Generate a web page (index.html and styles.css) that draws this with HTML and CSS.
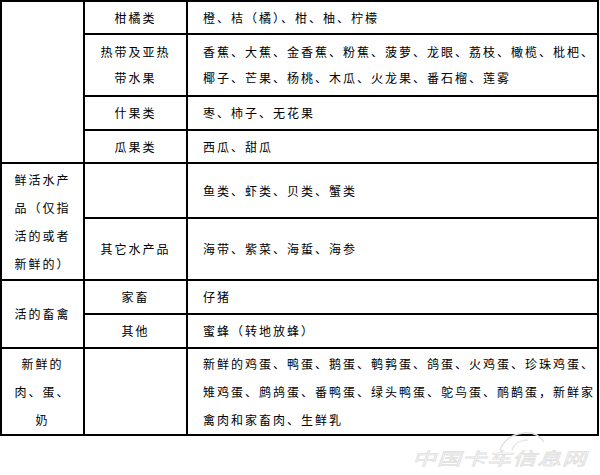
FILE: index.html
```html
<!DOCTYPE html>
<html lang="zh-CN">
<head>
<meta charset="utf-8">
<title>鲜活农产品品种目录</title>
<link rel="stylesheet" href="styles.css">
</head>
<body>
<div class="page">
  <table class="grid">
    <colgroup>
      <col class="c1">
      <col class="c2">
      <col class="c3">
    </colgroup>
    <tbody>
      <tr class="r1">
        <td class="cat" rowspan="4"></td>
        <td class="sub">柑橘类</td>
        <td class="items">橙、桔（橘）、柑、柚、柠檬</td>
      </tr>
      <tr class="r2">
        <td class="sub tight">热带及亚热<br>带水果</td>
        <td class="items tight">香蕉、大蕉、金香蕉、粉蕉、菠萝、龙眼、荔枝、橄榄、枇杷、<br>椰子、芒果、杨桃、木瓜、火龙果、番石榴、莲雾</td>
      </tr>
      <tr class="r3">
        <td class="sub">什果类</td>
        <td class="items">枣、柿子、无花果</td>
      </tr>
      <tr class="r4">
        <td class="sub">瓜果类</td>
        <td class="items">西瓜、甜瓜</td>
      </tr>
      <tr class="r5">
        <td class="cat" rowspan="2">鲜活水产<br>品（仅指<br>活的或者<br>新鲜的）</td>
        <td class="sub"></td>
        <td class="items">鱼类、虾类、贝类、蟹类</td>
      </tr>
      <tr class="r6">
        <td class="sub">其它水产品</td>
        <td class="items">海带、紫菜、海蜇、海参</td>
      </tr>
      <tr class="r7">
        <td class="cat" rowspan="2">活的畜禽</td>
        <td class="sub">家畜</td>
        <td class="items">仔猪</td>
      </tr>
      <tr class="r8">
        <td class="sub">其他</td>
        <td class="items">蜜蜂（转地放蜂）</td>
      </tr>
      <tr class="r9">
        <td class="cat">新鲜的<br>肉、蛋、<br>奶</td>
        <td class="sub"></td>
        <td class="items">新鲜的鸡蛋、鸭蛋、鹅蛋、鹌鹑蛋、鸽蛋、火鸡蛋、珍珠鸡蛋、<br>雉鸡蛋、鹧鸪蛋、番鸭蛋、绿头鸭蛋、鸵鸟蛋、鸸鹋蛋，新鲜家<br>禽肉和家畜肉、生鲜乳</td>
      </tr>
    </tbody>
  </table>
  <div class="mark">
    <svg class="mark-roof" width="50" height="24" viewBox="0 0 50 24">
      <path d="M2 22 C6 12 14 6 26 5 C36 4 42 8 46 14" fill="none" stroke="#e2e2e2" stroke-width="1.5"/>
      <path d="M14 22 C16 16 22 12 30 12" fill="none" stroke="#e8e8e8" stroke-width="1.5"/>
    </svg>
    <span class="mark-text">中国卡车信息网</span>
  </div>
</div>
</body>
</html>
```

FILE: styles.css
```css
html, body {
  margin: 0;
  padding: 0;
  background: #ffffff;
}

.page {
  position: relative;
  width: 600px;
  height: 475px;
  font-family: "Noto Sans CJK SC", "Noto Sans CJK JP", sans-serif;
  font-size: 12px;
  color: #000000;
}

.grid {
  border-collapse: collapse;
  table-layout: fixed;
  width: 597px;
}

.grid td {
  border: 2px solid #000000;
  padding: 0;
  vertical-align: middle;
  letter-spacing: 2px;
  line-height: 28px;
  white-space: nowrap;
}

.c1 { width: 83px; }
.c2 { width: 103px; }
.c3 { width: 411px; }

.cat {
  text-align: center;
  padding-left: 2px;
}

.sub {
  text-align: center;
  padding-left: 6px;
}

.items {
  text-align: left;
  padding-left: 15px !important;
}

.tight {
  line-height: 26px !important;
}

.r1 { height: 33px; }
.r2 { height: 62px; }
.r3 { height: 34px; }
.r4 { height: 33px; }
.r5 { height: 55px; }
.r6 { height: 62px; }
.r7 { height: 34px; }
.r8 { height: 34px; }
.r9 { height: 87px; }

.mark {
  position: absolute;
  left: 412px;
  top: 428px;
  width: 180px;
  height: 44px;
}

.mark-roof {
  position: absolute;
  left: 86px;
  top: 0;
}

.mark-text {
  position: absolute;
  left: 0;
  top: 20px;
  font-family: "Noto Sans CJK SC", sans-serif;
  font-size: 24px;
  font-weight: 400;
  font-style: italic;
  letter-spacing: 1px;
  line-height: 28px;
  color: #fbfbfb;
  -webkit-text-stroke: 1px #e0e0e0;
  transform: scaleY(0.72);
  transform-origin: left top;
  white-space: nowrap;
}
```
